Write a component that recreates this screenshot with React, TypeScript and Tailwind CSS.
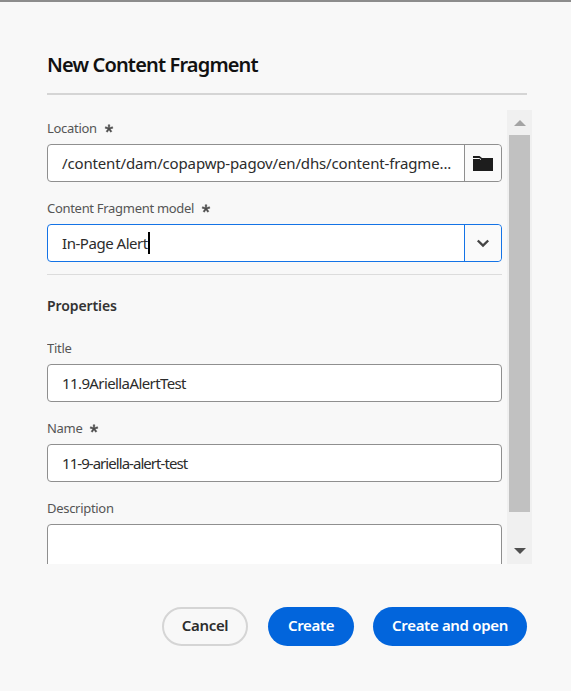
function Star() {
  return (
    <svg viewBox="0 0 10 10" className="ml-[7px] h-[10px] w-[10px] fill-[#4b4b4b] stroke-[#4b4b4b] stroke-[0.5]">
      <path d="M4.2 0.8h1.6l-.2 3 2.8-1.1.5 1.5-2.9.8 1.9 2.3-1.3.9L5 5.7 3.4 8.2l-1.3-.9L4 5 1.1 4.2l.5-1.5 2.8 1.1z" />
    </svg>
  );
}

function Label({ text, required }: { text: string; required?: boolean }) {
  return (
    <div className="flex h-[20px] items-center pt-px text-[13px] tracking-[-0.3px] text-[#555555]">
      {text}
      {required && <Star />}
    </div>
  );
}

function TextRow({ value, tracking }: { value: string; tracking: string }) {
  return (
    <div className={`flex h-[38px] w-[455px] items-center rounded-[4px] border border-[#8f8f8f] bg-white pl-[14px] text-[15px] text-[#2c2c2c] ${tracking}`}>
      {value}
    </div>
  );
}

export default function App() {
  return (
    <div className='h-[691px] w-[571px] overflow-hidden bg-[#f8f8f8] font-["Noto_Sans",sans-serif]'>
      <div className="h-[2px] bg-[#8c8c8c]" />

      {/* header */}
      <div className="ml-[47px] h-[93px] w-[480px] border-b-2 border-[#d5d5d5] pt-[47px]">
        <h1 className="text-[20px] leading-[32px] font-semibold tracking-[-0.85px] text-[#111111]">
          New Content Fragment
        </h1>
      </div>

      {/* scrolling body */}
      <div className="mt-[15px] ml-[47px] flex h-[454px] w-[485px] gap-[5px] overflow-hidden">
        <div className="h-full w-[455px] shrink-0 overflow-hidden pt-[8px]">
          <Label text="Location" required />
          <div className="mt-[6px] flex h-[38px] rounded-[4px] border border-[#8f8f8f] bg-white">
            <div className="flex min-w-0 flex-1 items-center overflow-hidden border-r border-[#8f8f8f] pl-[14px] text-[15px] tracking-[-0.15px] whitespace-nowrap text-[#2c2c2c]">
              /content/dam/copapwp-pagov/en/dhs/content-fragme...
            </div>
            <div className="flex w-[36px] items-center justify-center rounded-r-[4px] bg-[#fafafa]">
              <svg viewBox="0 0 20 16" className="h-[16px] w-[20px]">
                <path className="fill-[#1d1d1d]" d="M0 1h6.5l2.5 2h11v13H0z" />
                <path className="fill-none stroke-[#fafafa]" d="M0 3.5h6.5L8 4.6" />
              </svg>
            </div>
          </div>

          <div className="mt-[16px]">
            <Label text="Content Fragment model" required />
          </div>
          <div className="mt-[6px] flex h-[38px] rounded-[4px] border border-[#1473e6] bg-white">
            <div className="flex min-w-0 flex-1 items-center border-r border-[#1473e6] pl-[14px] text-[15px] tracking-[-0.46px] text-[#2c2c2c]">
              In-Page Alert
              <span className="h-[22px] w-[2px] bg-black" />
            </div>
            <div className="flex w-[36px] items-center justify-center rounded-r-[4px] bg-[#fafafa]">
              <svg viewBox="0 0 14 10" className="h-[10px] w-[14px] fill-none stroke-[#444444] stroke-[2.4]">
                <path d="M1.8 2.5 7 7.5l5.2-5" />
              </svg>
            </div>
          </div>

          <div className="mt-[12px] h-px bg-[#dcdcdc]" />

          <div className="mt-[21px] h-[20px] text-[14px] leading-[20px] font-semibold tracking-[-0.1px] text-[#333333]">
            Properties
          </div>

          <div className="mt-[22px]">
            <Label text="Title" />
          </div>
          <div className="mt-[6px]">
            <TextRow value="11.9AriellaAlertTest" tracking="tracking-[-0.6px]" />
          </div>

          <div className="mt-[16px]">
            <Label text="Name" required />
          </div>
          <div className="mt-[6px]">
            <TextRow value="11-9-ariella-alert-test" tracking="tracking-[-0.95px]" />
          </div>

          <div className="mt-[16px]">
            <Label text="Description" />
          </div>
          <div className="mt-[6px] h-[60px] rounded-[4px] border border-[#8f8f8f] bg-white" />
        </div>

        {/* scrollbar */}
        <div className="flex h-full w-[25px] shrink-0 flex-col items-center bg-[#f0f0f0]">
          <div className="flex h-[25px] items-center justify-center">
            <div className="h-0 w-0 border-x-[6px] border-b-[6px] border-x-transparent border-b-[#a3a3a3]" />
          </div>
          <div className="h-[377px] w-[21px] bg-[#c1c1c1]" />
          <div className="flex flex-1 items-end justify-center pb-[10px]">
            <div className="h-0 w-0 border-x-[6px] border-t-[6px] border-x-transparent border-t-[#505050]" />
          </div>
        </div>
      </div>

      {/* footer */}
      <div className="mt-[43px] mr-[44px] flex justify-end gap-[19px] text-[15px] font-semibold tracking-[-0.33px]">
        <button className="mr-px flex h-[39px] w-[86px] items-center justify-center rounded-full border-2 border-[#d5d5d5] pb-[2px] text-[#2c2c2c]">
          Cancel
        </button>
        <button className="flex h-[39px] w-[86px] items-center justify-center rounded-full bg-[#0265dc] pb-[2px] text-white">
          Create
        </button>
        <button className="flex h-[39px] w-[154px] items-center justify-center rounded-full bg-[#0265dc] pb-[2px] text-white">
          Create and open
        </button>
      </div>
    </div>
  );
}
